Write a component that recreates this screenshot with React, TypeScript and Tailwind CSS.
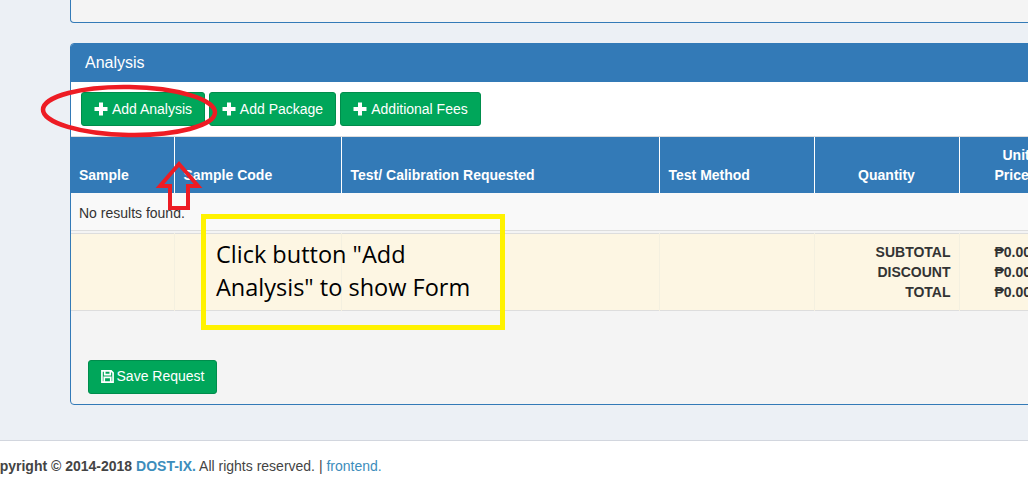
import React from 'react';

const font = "font-['Liberation_Sans',Arial,sans-serif]";

const PlusIcon = () => (
    <svg className="w-[14px] h-[14px]" viewBox="0 0 14 14" fill="currentColor">
        <path d="M5 0.5h4v4.500h4.500v4H9v4.500H5V9H0.500V5H5z" />
    </svg>
);

const GreenButton: React.FC<{ label: string; className?: string }> = ({ label, className }) => (
    <button className={`h-[34px] flex items-center justify-center gap-[4px] rounded-[3px] border border-[#008d4c] bg-[#00a65a] text-white text-[14px] ${className}`}>
        <PlusIcon />
        {label}
    </button>
);

const SaveIcon = () => (
    <svg className="w-[13px] h-[13px]" viewBox="0 0 14 14" fill="none" stroke="currentColor" strokeWidth="1.8">
        <path d="M1 1h10l2 2v10H1z" />
        <path d="M4 1v4h6V1" />
        <path d="M3.500 13V8h7v5" />
    </svg>
);

const thBase = 'border-l border-white align-bottom px-[9px] pb-[8px] text-[14px] leading-[20px] font-bold text-white';
const tdTotal = 'border-l border-[#f4f0e0]';

export default function App() {
    return (
        <div className={`relative w-[1028px] h-[490px] overflow-hidden bg-[#ecf0f5] text-[#333] ${font}`}>
            <div className="h-[440px] pl-[70px]">
                {/* previous panel, cut off at the top */}
                <div className="w-[1100px] h-[23px] border border-t-0 border-[#337ab7] rounded-b-[4px] bg-[#f4f4f4]" />

                <div className="mt-[20px] w-[1100px] h-[362px] border border-[#337ab7] rounded-[4px] bg-[#f4f4f4] overflow-hidden">
                    <div className="h-[38px] bg-[#337ab7] text-white text-[16px] leading-[38px] pl-[14px]">Analysis</div>
                    <div className="h-[55px] bg-white flex items-start gap-[4px] pl-[10px] pt-[10px] border-b border-[#ddd]">
                        <GreenButton label="Add Analysis" className="w-[124px]" />
                        <GreenButton label="Add Package" className="w-[127px]" />
                        <GreenButton label="Additional Fees" className="w-[141px]" />
                    </div>
                    <table className="table-fixed border-collapse w-[1100px]">
                        <colgroup>
                            <col className="w-[103px]" />
                            <col className="w-[167px]" />
                            <col className="w-[318px]" />
                            <col className="w-[155px]" />
                            <col className="w-[145px]" />
                            <col className="w-[212px]" />
                        </colgroup>
                        <thead>
                            <tr className="h-[56px] bg-[#337ab7]">
                                <th className={`${thBase} text-left border-l-0 pl-[8px]`}>Sample</th>
                                <th className={`${thBase} text-left`}>Sample Code</th>
                                <th className={`${thBase} text-left`}>Test/ Calibration Requested</th>
                                <th className={`${thBase} text-left`}>Test Method</th>
                                <th className={`${thBase} text-center`}>Quantity</th>
                                <th className={`${thBase} text-left pl-[35px]`}>
                                    <span className="block pl-[8px]">Unit</span>
                                    Price
                                </th>
                            </tr>
                        </thead>
                        <tbody>
                            <tr className="h-[37px] bg-[#f9f9f9] border-b border-[#ddd]">
                                <td colSpan={6} className="px-[8px] pt-[4px] text-[14px]">No results found.</td>
                            </tr>
                            <tr className="h-[3px] bg-[#f4f4f4]"><td colSpan={6} /></tr>
                            <tr className="h-[77px] bg-[#fdf6e3] border-y border-[#ddd] text-[14px] leading-[20px] font-bold">
                                <td />
                                <td className={tdTotal} />
                                <td className={tdTotal} />
                                <td className={tdTotal} />
                                <td className={`${tdTotal} text-right pr-[8px]`}>
                                    <div>SUBTOTAL</div>
                                    <div>DISCOUNT</div>
                                    <div>TOTAL</div>
                                </td>
                                <td className={`${tdTotal} pl-[35px]`}>
                                    <div>₱0.00</div>
                                    <div>₱0.00</div>
                                    <div>₱0.00</div>
                                </td>
                            </tr>
                        </tbody>
                    </table>
                    <button className="ml-[17px] mt-[49px] w-[129px] h-[34px] flex items-center justify-center gap-[3px] rounded-[3px] border border-[#008d4c] bg-[#00a65a] text-white text-[14px]">
                        <SaveIcon />
                        Save Request
                    </button>
                </div>
            </div>

            <footer className="h-[50px] bg-white border-t border-[#d2d6de] pt-[15px] text-[14px] leading-[20px] text-[#444] whitespace-nowrap -ml-[19px]">
                <strong>Copyright © 2014-2018 <a className="text-[#3c8dbc]">DOST-IX.</a></strong> All rights reserved. | <a className="text-[#3c8dbc]">frontend.</a>
            </footer>

            {/* annotations drawn over the screenshot */}
            <svg className="absolute left-[38px] top-[82px]" width="185" height="58" viewBox="0 0 185 58" fill="none">
                <ellipse cx="91" cy="29" rx="86" ry="24" transform="rotate(1 91 29)" stroke="#ed1c24" strokeWidth="4.500" />
            </svg>
            <svg className="absolute left-[150px] top-[155px]" width="60" height="60" viewBox="0 0 60 60" fill="none">
                <path d="M29 9 L48 31 H38 V53 H20 V31 H10 Z" stroke="#ed1c24" strokeWidth="4" />
            </svg>
            <div className="absolute left-[201px] top-[214px] w-[304px] h-[116px] border-[5px] border-[#fff200] pl-[10px] pt-[19px] font-['Open_Sans',sans-serif] text-[23.5px] leading-[33px] text-black whitespace-nowrap">
                Click button "Add<br />Analysis" to show Form
            </div>
        </div>
    );
}
